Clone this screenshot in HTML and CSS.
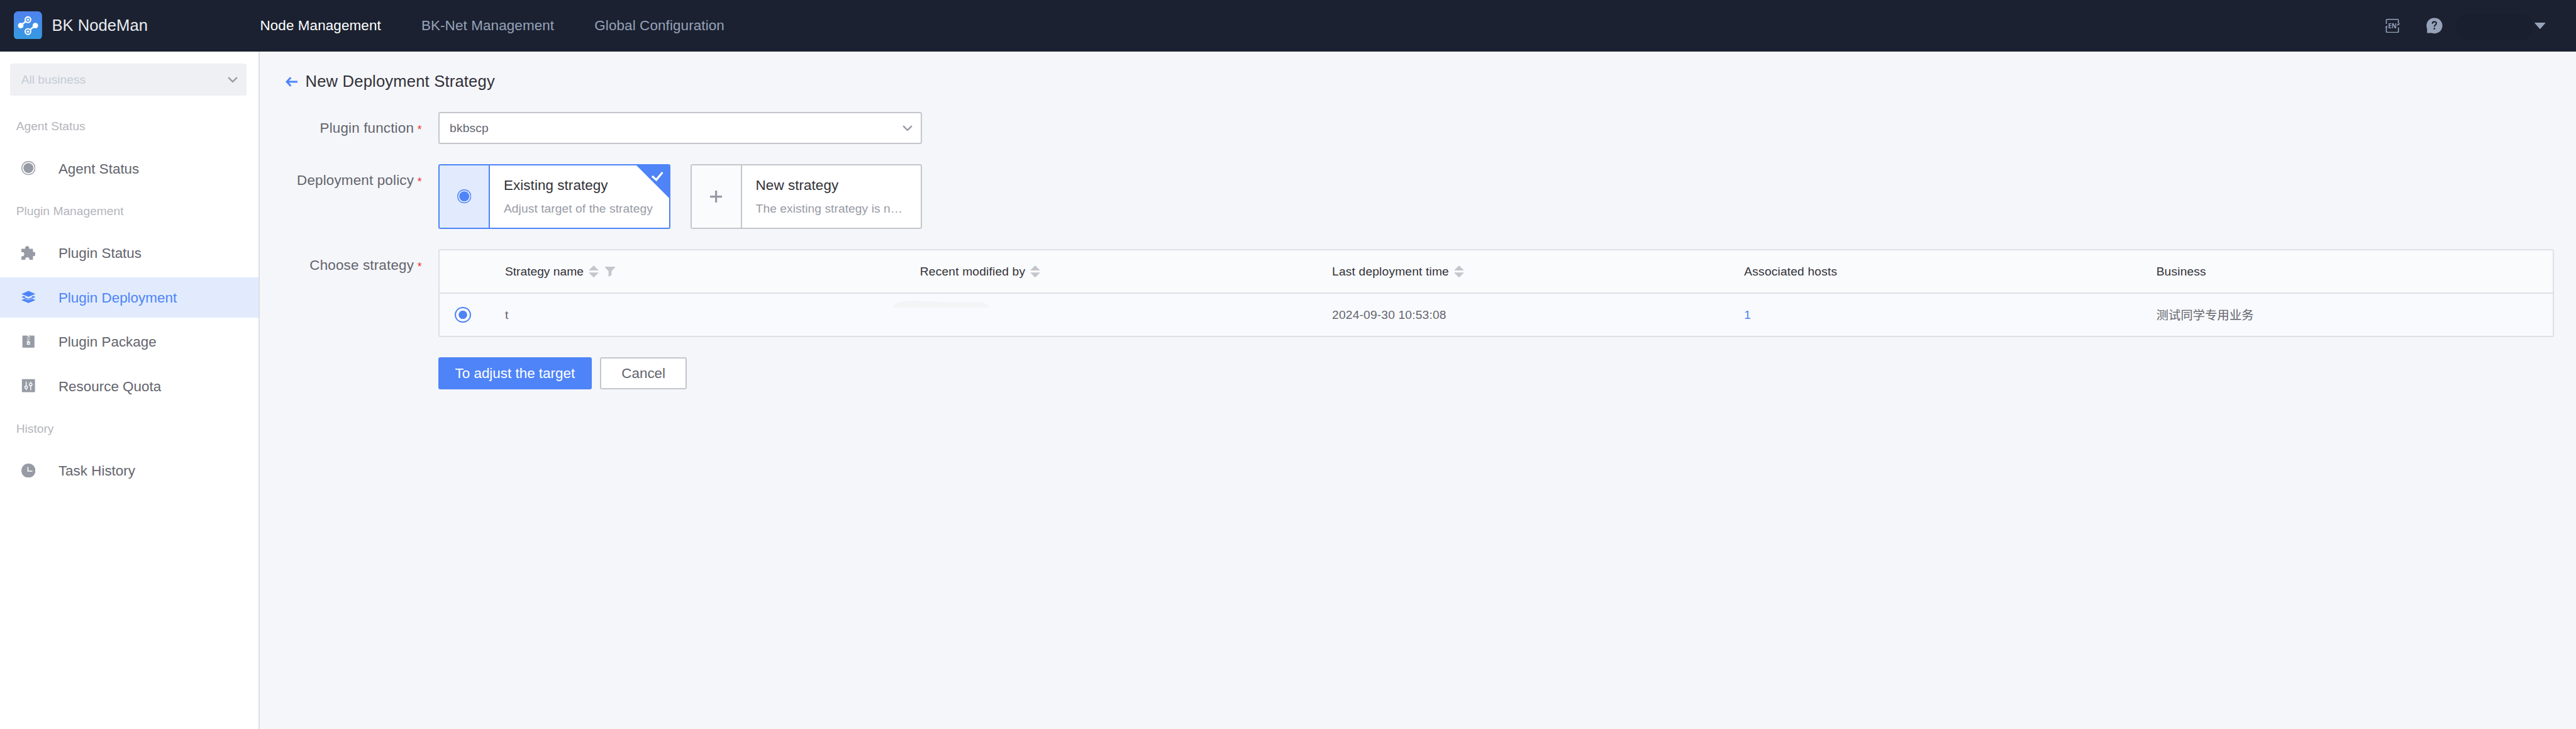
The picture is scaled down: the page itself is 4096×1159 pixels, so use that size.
FILE: index.html
```html
<!DOCTYPE html>
<html lang="en">
<head>
<meta charset="utf-8">
<title>BK NodeMan</title>
<link rel="stylesheet" href="styles.css">
</head>
<body>
<svg class="defs" width="0" height="0">
  <symbol id="chevron" viewBox="0 0 20 12"><path d="M1.5 1.5 10 10l8.500-8.500" fill="none" stroke="currentColor" stroke-width="3"/></symbol>
  <symbol id="target" viewBox="0 0 28 28"><circle cx="14" cy="14" r="13.100" fill="none" stroke="currentColor" stroke-width="1.700"/><circle cx="14" cy="14" r="10" fill="currentColor"/></symbol>
  <symbol id="sort" viewBox="0 0 20 24"><path d="M10 0 20 10H0zM0 14H20L10 24z" fill="currentColor"/></symbol>
</svg>

<header class="topbar">
  <a class="brand">
    <svg class="brand-logo" viewBox="0 0 56 56">
      <defs><linearGradient id="logo" x1="0" y1="0" x2="0" y2="1"><stop offset="0" stop-color="#4f82ee"/><stop offset="1" stop-color="#359be0"/></linearGradient></defs>
      <rect width="56" height="56" rx="8" fill="url(#logo)"/>
      <path d="M14 28 28 16.500M28 40 43 28" stroke="#fff" stroke-width="3"/>
      <circle cx="13.700" cy="28.300" r="5.500" fill="#fff"/><circle cx="42.700" cy="28.300" r="5.500" fill="#fff"/>
      <g fill="#448ee8" stroke="#fff" stroke-width="2.600"><circle cx="28" cy="16.600" r="5.500"/><circle cx="28" cy="40.200" r="5.500"/></g>
      <circle cx="28" cy="16.600" r="2.200" fill="#fff"/><circle cx="28" cy="40.200" r="2.200" fill="#fff"/>
    </svg>
    <span class="brand-name">BK NodeMan</span>
  </a>
  <nav class="topnav">
    <a class="topnav-item is-active">Node Management</a>
    <a class="topnav-item">BK-Net Management</a>
    <a class="topnav-item">Global Configuration</a>
  </nav>
  <div class="tools">
    <svg class="tool-lang" viewBox="0 0 30 28">
      <g fill="none" stroke="currentColor" stroke-width="2"><path d="M3 10V3q0-2 2-2h20q2 0 2 2v6M27 17v8q0 2-2 2H5q-2 0-2-2V15"/></g>
      <path d="M24.500 13.500V11L30 8.500q-1 4-5.500 5zM0 17l5-4v4z" fill="currentColor"/>
      <text x="6.500" y="19" textLength="17" lengthAdjust="spacingAndGlyphs" class="lang-text">EN</text>
    </svg>
    <svg class="tool-help" viewBox="0 0 32 32">
      <path d="M16 .5A15.500 15.500 0 1 1 11 30.500H1.500V22A15.500 15.500 0 0 1 16 .5z" fill="currentColor"/>
      <path d="M12 12.200c0-5.200 8-5 8-.8 0 3-4 3-4 6.600" fill="none" stroke="#1b2130" stroke-width="2.600"/><circle cx="16" cy="22" r="1.700" fill="#1b2130"/>
    </svg>
    <span class="user-name"></span>
    <svg class="tool-caret" viewBox="0 0 22 13"><path d="M1 0h20q1.500 0 .5 1L12 12q-1 1-2 0L.5 1Q-.5 0 1 0z" fill="currentColor"/></svg>
  </div>
</header>

<div class="layout">
  <aside class="sidebar">
    <div class="biz-select"><span>All business</span><svg class="chevron"><use href="#chevron"/></svg></div>
    <div class="menu-title">Agent Status</div>
    <a class="menu-item"><svg class="menu-icon" viewBox="0 0 28 28"><use href="#target"/></svg>Agent Status</a>
    <div class="menu-title">Plugin Management</div>
    <a class="menu-item"><svg class="menu-icon" viewBox="0 0 28 28"><path d="M1 5.500h6.500V4.200a4 4 0 0 1 8 0v1.300H22q1 0 1 1V12h1a4 4 0 0 1 0 8.200h-1V27q0 1-1 1h-6.200v-1.500a4 4 0 0 0-8 0V28H1q-1 0-1-1v-6.500h1.500a4.200 4.200 0 0 0 0-8.400H0V6.500q0-1 1-1z" fill="currentColor"/></svg>Plugin Status</a>
    <a class="menu-item is-active"><svg class="menu-icon" viewBox="0 0 28 28"><path fill="currentColor" fill-rule="evenodd" d="M14 2 28 8 20.500 11 14 13.600 7.500 11 0 8zM0 14l5-2.200L8 13l-2.500 1L14 17.500l8.500-3.500-2.500-1 3-1.200 5 2.200-8 3.200-6 2-6-2zM0 20l6.500-2.500L14 20.300l7.500-2.800L28 20l-14 6z"/></svg>Plugin Deployment</a>
    <a class="menu-item"><svg class="menu-icon" viewBox="0 0 28 28"><path fill="currentColor" fill-rule="evenodd" d="M3 2h9v1.500h3V2H25q1 0 1 1V25q0 1-1 1H3q-1 0-1-1V3q0-1 1-1zM14 3.800v1.500h3V3.800zM11 6v1.300h3V6zM14 8v1.300h3V8zM11 10v1.300h3V10zM11 13v7h6v-7h-2.500v-1h-1v1zM12.500 16h3v1.800h-3z"/></svg>Plugin Package</a>
    <a class="menu-item"><svg class="menu-icon" viewBox="0 0 28 28"><rect x="1" y="1" width="26" height="26" rx="1" fill="currentColor"/><g stroke="#fff" stroke-width="1.800" fill="#979ba5"><path d="M9.500 6v17M18.500 6v17"/><circle cx="9.500" cy="17" r="2.600"/><circle cx="18.500" cy="11.500" r="2.600"/></g></svg>Resource Quota</a>
    <div class="menu-title">History</div>
    <a class="menu-item"><svg class="menu-icon" viewBox="0 0 28 28"><circle cx="14" cy="14" r="14" fill="currentColor"/><path d="M13 7v8h9" fill="none" stroke="#fff" stroke-width="2"/></svg>Task History</a>
  </aside>

  <main class="content">
    <div class="page-head">
      <svg class="back" viewBox="0 0 24 20"><path d="M10.500 1.500 2.500 10l8 8.500M2.500 10H24" fill="none" stroke="currentColor" stroke-width="3.600"/></svg>
      <h1 class="page-title">New Deployment Strategy</h1>
    </div>

    <div class="form-row">
      <label class="form-label">Plugin function<i class="required">*</i></label>
      <div class="select"><span>bkbscp</span><svg class="chevron"><use href="#chevron"/></svg></div>
    </div>

    <div class="form-row">
      <label class="form-label">Deployment policy<i class="required">*</i></label>
      <div class="cards">
        <div class="card is-checked">
          <div class="card-icon"><svg class="icon-target"><use href="#target"/></svg></div>
          <div class="card-body"><div class="card-title">Existing strategy</div><div class="card-desc">Adjust target of the strategy</div></div>
          <svg class="card-corner" viewBox="0 0 66 66"><path d="M0 0H66V66z" fill="currentColor"/><path d="M31.500 21.500 40 29 52.500 14" fill="none" stroke="#fff" stroke-width="4"/></svg>
        </div>
        <div class="card">
          <div class="card-icon"><svg class="icon-plus" viewBox="0 0 24 24"><path d="M12 0v24M0 12h24" stroke="currentColor" stroke-width="4"/></svg></div>
          <div class="card-body"><div class="card-title">New strategy</div><div class="card-desc">The existing strategy is n…</div></div>
        </div>
      </div>
    </div>

    <div class="form-row">
      <label class="form-label">Choose strategy<i class="required">*</i></label>
      <div class="table">
        <div class="tr thead">
          <div class="th"></div>
          <div class="th th-name">Strategy name<svg class="sort"><use href="#sort"/></svg><svg class="filter" viewBox="0 0 20 20"><path d="M.5 0h19q.8.500.3 1.500L13 9v8l-6 3V9L.2 1.500Q-.3.500.5 0z" fill="currentColor"/></svg></div>
          <div class="th">Recent modified by<svg class="sort"><use href="#sort"/></svg></div>
          <div class="th">Last deployment time<svg class="sort"><use href="#sort"/></svg></div>
          <div class="th">Associated hosts</div>
          <div class="th">Business</div>
        </div>
        <div class="tr">
          <div class="td td-radio"><span class="radio"></span></div>
          <div class="td">t</div>
          <div class="td td-user"><svg class="smudge" viewBox="0 0 194 14"><path d="M0 14Q8 0 42 0L120 3H178Q188 4 194 14z" fill="#f3f4f6"/></svg></div>
          <div class="td">2024-09-30 10:53:08</div>
          <div class="td"><a class="link">1</a></div>
          <div class="td td-biz">测试同学专用业务</div>
        </div>
      </div>
    </div>

    <div class="actions">
      <button class="btn btn-primary">To adjust the target</button>
      <button class="btn">Cancel</button>
    </div>
  </main>
</div>
</body>
</html>
```
FILE: styles.css
```css
/* 1rem = 20 design pixels of a 5112px-wide canvas */
html { font-size: calc(100vw / 255.6); }
* { box-sizing: border-box; }
body {
  margin: 0;
  height: 100vh;
  display: flex;
  flex-direction: column;
  overflow: hidden;
  background: #f5f6fa;
  color: #63656e;
  font-family: "Liberation Sans", "Noto Sans CJK SC", sans-serif;
  font-size: 1.2rem;
}
svg { display: block; flex: none; }
.defs { position: absolute; }

.topbar {
  flex: none;
  height: 5.1rem;
  display: flex;
  align-items: center;
  background: #1b2130;
  color: #96a2b9;
  padding: 0 3.05rem 0 1.4rem;
}
.brand { display: flex; align-items: center; width: 24.4rem; margin-top: -.1rem; }
.brand-logo { width: 2.8rem; height: 2.8rem; }
.brand-name { margin-left: .95rem; font-size: 1.6rem; color: #eaebf0; }
.topnav { display: flex; gap: 4rem; font-size: 1.4rem; letter-spacing: .007rem; }
.topnav-item.is-active { color: #fff; }
.tools { margin-left: auto; display: flex; align-items: center; }
.tool-lang { width: 1.5rem; height: 1.4rem; }
.lang-text { font: 700 14px "Open Sans", sans-serif; fill: currentColor; }
.tool-help { width: 1.6rem; height: 1.6rem; margin-left: 2.65rem; }
.user-name { width: 7.6rem; height: 2.7rem; margin: .2rem 0 0 1.35rem; border-radius: 1.2rem; background: #1a1f30; }
.tool-caret { width: 1.1rem; height: .65rem; margin-left: .15rem; }

.layout { flex: 1; display: flex; min-height: 0; }
.sidebar { flex: none; width: 25.8rem; background: #fff; border-right: 2px solid #dcdee5; padding-top: 1.2rem; }
.biz-select {
  margin: 0 1.2rem .8rem 1rem;
  height: 3.2rem;
  padding: .08rem .9rem 0 1.1rem;
  display: flex;
  align-items: center;
  justify-content: space-between;
  border-radius: .2rem;
  background: #eff0f4;
  color: #c4ccd6;
}
.chevron { width: 1rem; height: .6rem; color: #979ba5; }
.menu-title { height: 4.4rem; padding-top: .08rem; line-height: 4.4rem; padding-left: 1.6rem; color: #b4b5bb; }
.menu-item {
  display: flex;
  align-items: center;
  height: 4rem;
  margin-bottom: .4rem;
  padding: .12rem 0 0 2.1rem;
  font-size: 1.4rem;
}
.menu-item:has(+ .menu-title) { margin-bottom: 0; }
.menu-icon { width: 1.4rem; height: 1.4rem; margin: 0 2.3rem .12rem 0; color: #979ba5; }
.menu-item.is-active { background: #e1ebfd; color: #4e84f8; }
.is-active .menu-icon { color: inherit; }

.content { flex: 1; min-width: 0; padding: 1.8rem 2.2rem 0 2.5rem; letter-spacing: .01rem; }
.page-head { display: flex; align-items: center; height: 2.4rem; margin-bottom: 1.8rem; }
.back { width: 1.2rem; height: 1rem; color: #4e84f8; }
.page-title { margin: 0 0 0 .8rem; font-size: 1.6rem; font-weight: 400; color: #313238; }

.form-row { display: flex; align-items: flex-start; margin-bottom: 2rem; }
.form-label {
  flex: none;
  width: 15.2rem;
  height: 3.2rem;
  line-height: 3.24rem;
  padding-right: 1.65rem;
  display: flex;
  justify-content: flex-end;
  font-size: 1.4rem;
}
.required { margin-left: .35rem; font-style: normal; font-size: 1.1rem; color: #ea3636; line-height: 3.6rem; }

.select {
  width: 48rem;
  height: 3.2rem;
  padding: .08rem .8rem 0 1rem;
  display: flex;
  align-items: center;
  justify-content: space-between;
  border: 2px solid #c4c6cc;
  border-radius: .2rem;
  background: #fff;
}

.cards { display: flex; gap: 2rem; letter-spacing: .004rem; }
.card {
  position: relative;
  display: flex;
  width: 23rem;
  height: 6.4rem;
  border: 2px solid #c4c6cc;
  border-radius: .2rem;
  background: #fff;
  overflow: hidden;
}
.card-icon {
  flex: none;
  width: 5rem;
  display: flex;
  align-items: center;
  justify-content: center;
  border-right: 2px solid #c4c6cc;
  background: #fafbfd;
  color: #979ba5;
}
.card-body { min-width: 0; padding: 1rem 1rem 0 1.36rem; }
.card-title { font-size: 1.4rem; line-height: 2rem; color: #313238; }
.card-desc { margin-top: .4rem; line-height: 1.8rem; color: #979ba5; white-space: nowrap; }
.card.is-checked { border-color: #4e84f8; }
.is-checked .card-icon { border-color: #4e84f8; background: #e1ebfd; color: #4e84f8; }
.icon-target { width: 1.4rem; height: 1.4rem; }
.icon-plus { width: 1.2rem; height: 1.2rem; }
.card-corner { position: absolute; top: 0; right: 0; width: 3.25rem; height: 3.25rem; color: #4e84f8; }

.table {
  flex: 1;
  height: 8.75rem;
  display: flex;
  flex-direction: column;
  border: 2px solid #dfe0e5;
  border-radius: .2rem;
  background: #f9fafd;
}
.tr { flex: 1; display: grid; grid-template-columns: 5rem 41.1fr 40.9fr 40.9fr 40.9fr 40.9fr; align-items: center; }
.thead { flex: none; height: 4.3rem; border-bottom: 2px solid #dfe0e5; background: #fafbfd; color: #313238; }
.th, .td { display: flex; align-items: center; padding: .12rem 0 0 1.57rem; white-space: nowrap; }
.th:nth-child(2), .td:nth-child(2) { padding-left: 1.48rem; }
.th-name { letter-spacing: 0; }
.td-radio { padding: 0 0 0 1.5rem; }
.td-biz { padding-top: 0; padding-bottom: .1rem; }
.radio { width: 1.6rem; height: 1.6rem; border: 2px solid #4e84f8; border-radius: 50%; background: radial-gradient(circle, #4e84f8 .4rem, #fff .44rem); }
.sort { width: 1rem; height: 1.2rem; margin: 0 0 .1rem .48rem; color: #c4c6cc; }
.filter { width: 1rem; height: 1rem; margin: 0 0 .05rem .62rem; color: #c4c6cc; }
.td-user { padding: 0; align-self: start; }
.smudge { width: 9.7rem; height: .7rem; margin: .7rem 0 0 -1.25rem; }
.link { color: #4e84f8; }

.actions { display: flex; gap: .85rem; padding-left: 15.2rem; }
.btn {
  width: 8.6rem;
  height: 3.2rem;
  padding: .08rem 0 0;
  border: 2px solid #c4c6cc;
  border-radius: .2rem;
  background: #fff;
  color: #63656e;
  font-family: inherit;
  font-size: 1.4rem;
}
.btn-primary { width: 15.2rem; border-color: #4e84f8; background: #4e84f8; color: #fff; }
```
